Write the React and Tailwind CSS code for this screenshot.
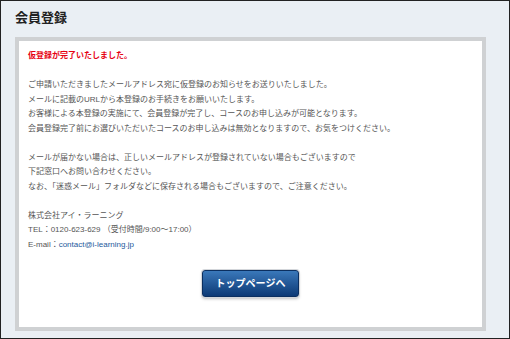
import React from "react";

const font = { fontFamily: '"Liberation Sans", "Noto Sans CJK JP", sans-serif' };

const RegistrationDone = () => {
  const notice = [
    "ご申請いただきましたメールアドレス宛に仮登録のお知らせをお送りいたしました。",
    "メールに記載のURLから本登録のお手続きをお願いいたします。",
    "お客様による本登録の実施にて、会員登録が完了し、コースのお申し込みが可能となります。",
    "会員登録完了前にお選びいただいたコースのお申し込みは無効となりますので、お気をつけください。",
  ];
  const trouble = [
    "メールが届かない場合は、正しいメールアドレスが登録されていない場合もございますので",
    "下記窓口へお問い合わせください。",
    "なお、「迷惑メール」フォルダなどに保存される場合もございますので、ご注意ください。",
  ];

  return (
    <div
      className="w-[510px] h-[339px] box-border border border-[#222] bg-[#eaeff4] flex flex-col"
      style={font}
    >
      <h1 className="h-[36px] pl-[14px] pt-[8px] text-[13px] leading-[18px] font-bold text-[#222]">
        会員登録
      </h1>
      <div className="ml-[14px] w-[471px] h-[294px] box-border border-4 border-[#cfd1d3] bg-white px-[9px] pt-[8px] flex flex-col text-[8px] leading-[14.5px] text-[#555]">
        <p className="font-bold text-[#e60012]">仮登録が完了いたしました。</p>
        <div className="h-[14.5px]" />
        {notice.map((line) => (
          <p key={line}>{line}</p>
        ))}
        <div className="h-[14.5px]" />
        {trouble.map((line) => (
          <p key={line}>{line}</p>
        ))}
        <div className="h-[14.5px]" />
        <p>株式会社アイ・ラーニング</p>
        <p>TEL：0120-623-629 （受付時間/9:00〜17:00）</p>
        <p>
          E-mail：<span className="text-[#1d5a9c]">contact@i-learning.jp</span>
        </p>
        <button className="mt-[18px] mx-auto w-[97px] h-[27px] rounded-[3px] bg-linear-to-b from-[#3a78ba] to-[#0d3a76] border border-[#0b2f60] ring-1 ring-[#d3d6da] shadow-[0_2px_3px_rgba(0,0,0,0.25)] text-white text-[10px] font-bold leading-none">
          トップページへ
        </button>
      </div>
    </div>
  );
};

export default function App() {
  return <RegistrationDone />;
}
